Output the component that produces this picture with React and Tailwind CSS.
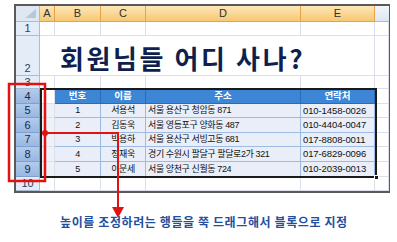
import React from "react";

const W = [24, 15, 46, 45, 155, 74, 14];
const ROWS = [14, 40, 13, 15, 14, 15, 14, 15, 15, 14];

const data = [
  ["1", "서용석", "서울 용산구 청암동 871", "010-1458-0026"],
  ["2", "김동욱", "서울 영등포구 양화동 487", "010-4404-0047"],
  ["3", "박용하", "서울 용산구 서빙고동 681", "017-8808-0011"],
  ["4", "정재욱", "경기 수원시 팔달구 팔달로2가 321", "017-6829-0096"],
  ["5", "이문세", "서울 양천구 신월동 724", "010-2039-0013"],
];

function RowHead({ n, h, sel, bottom }) {
  return (
    <div
      style={{ height: h }}
      className={`w-[24px] shrink-0 flex justify-center ${bottom ? "items-end" : "items-center"} border-r border-b text-[11px] leading-none font-['Liberation_Sans',sans-serif] ${
        sel
          ? "bg-gradient-to-b from-[#b3cbec] to-[#98b7e2] border-[#7e9fcf] text-[#14284a]"
          : "bg-[#e4ecf7] border-[#a9bcd6] text-[#2e4060]"
      }`}
    >
      <span className={bottom ? "pb-[1px]" : ""}>{n}</span>
    </div>
  );
}

function Cell({ w, className = "", children }) {
  return (
    <div
      style={{ width: w }}
      className={`shrink-0 border-r border-b border-[#dadfea] flex items-center overflow-hidden whitespace-nowrap ${className}`}
    >
      {children}
    </div>
  );
}

export default function App() {
  return (
    <div className="w-[397px] h-[242px] bg-white relative overflow-hidden font-['Liberation_Sans','Noto_Sans_CJK_KR',sans-serif]">
      <div className="pt-[4px] pl-[14px]">
        <div className="relative w-[376px] border-2 border-[#5a5a5a] bg-white">
          {/* column headers */}
          <div className="flex h-[16px]">
            <div className="w-[24px] shrink-0 bg-[#dfe7f2] border-r border-b border-[#a9bcd6] relative">
              <svg width="23" height="15" className="absolute left-0 top-0">
                <polygon points="20,3 20,12 9,12" fill="#b7c7dc" />
              </svg>
            </div>
            {["A", "B", "C", "D", "E", ""].map((c, i) => (
              <div
                key={i}
                style={{ width: W[i + 1] }}
                className={`shrink-0 flex items-center justify-center text-[11px] leading-none text-[#2f2f2f] border-b ${
                  i < 5
                    ? "bg-gradient-to-b from-[#fde6b8] to-[#f7c870] border-r border-[#e7a24a]"
                    : "bg-gradient-to-b from-[#f3f6fb] to-[#dde6f2] border-[#a9bcd6]"
                }`}
              >
                {c}
              </div>
            ))}
          </div>

          {/* row 1 */}
          <div className="flex" style={{ height: ROWS[0] }}>
            <RowHead n="1" h={ROWS[0]} />
            {W.slice(1).map((w, i) => (
              <Cell key={i} w={w} />
            ))}
          </div>

          {/* row 2 title */}
          <div className="flex relative" style={{ height: ROWS[1] }}>
            <RowHead n="2" h={ROWS[1]} bottom />
            {W.slice(1).map((w, i) => (
              <Cell key={i} w={w} className={i < 4 ? "border-r-0" : ""} />
            ))}
            <div className="absolute left-[44px] bottom-[5px] font-['Noto_Sans_CJK_KR',sans-serif] text-[26px] font-bold leading-none text-[#0f1f4e] tracking-[2.6px] whitespace-nowrap">
              회원님들 어디 사나?
            </div>
          </div>

          {/* row 3 */}
          <div className="flex" style={{ height: ROWS[2] }}>
            <RowHead n="3" h={ROWS[2]} />
            {W.slice(1).map((w, i) => (
              <Cell key={i} w={w} />
            ))}
          </div>

          {/* row 4 table header */}
          <div className="flex" style={{ height: ROWS[3] }}>
            <RowHead n="4" h={ROWS[3]} sel />
            <Cell w={W[1]} className="bg-white" />
            {["번호", "이름", "주소", "연락처"].map((t, i) => (
              <div
                key={i}
                style={{ width: W[i + 2] }}
                className="shrink-0 bg-[#3c86d5] border-r border-b border-[#2c6cb6] text-white text-[9.5px] font-bold flex items-center justify-center leading-none font-['Noto_Sans_CJK_KR',sans-serif]"
              >
                {t}
              </div>
            ))}
            <Cell w={W[6]} />
          </div>

          {/* data rows */}
          {data.map((r, ri) => (
            <div key={ri} className="flex" style={{ height: ROWS[4 + ri] }}>
              <RowHead n={String(5 + ri)} h={ROWS[4 + ri]} sel />
              <Cell w={W[1]} className="bg-[#eef1f8]" />
              {r.map((t, i) => (
                <div
                  key={i}
                  style={{ width: W[i + 2] }}
                  className={`shrink-0 bg-[#e9eef8] border-r border-b border-[#9dbae3] text-[#111] flex items-center leading-none whitespace-nowrap overflow-hidden ${
                    i < 2 ? "justify-center" : "pl-[2px]"
                  } ${i === 3 ? "text-[9.5px] tracking-[-0.1px]" : "text-[9px] tracking-[-0.4px]"}`}
                >
                  {t}
                </div>
              ))}
              <Cell w={W[6]} />
            </div>
          ))}

          {/* row 10 */}
          <div className="flex" style={{ height: ROWS[9] }}>
            <RowHead n="10" h={ROWS[9]} />
            {W.slice(1).map((w, i) => (
              <Cell key={i} w={w} />
            ))}
          </div>

          {/* selection border */}
          <div className="absolute left-[24px] top-[82px] w-[337px] h-[90px] border-2 border-[#1a1a1a] pointer-events-none" />
          <div className="absolute left-[358px] top-[169px] w-[5px] h-[5px] bg-[#1a1a1a] border border-white" />
        </div>
      </div>

      {/* annotation */}
      <svg width="397" height="242" className="absolute left-0 top-0 pointer-events-none">
        <rect x="9" y="84" width="36" height="97" fill="none" stroke="#e21212" strokeWidth="2.5" />
        <circle cx="45" cy="133" r="3" fill="#e21212" />
        <polyline points="45,133 118,133 118,210" fill="none" stroke="#e21212" strokeWidth="2" />
        <polygon points="112,207 124,207 118,218" fill="#e21212" />
      </svg>

      <div className="absolute left-[60px] top-[216px] font-['Noto_Sans_CJK_KR',sans-serif] text-[12px] font-bold text-[#1f4f9e] leading-none whitespace-nowrap tracking-[0.6px]">
        높이를 조정하려는 행들을 쭉 드래그해서 블록으로 지정
      </div>
    </div>
  );
}
